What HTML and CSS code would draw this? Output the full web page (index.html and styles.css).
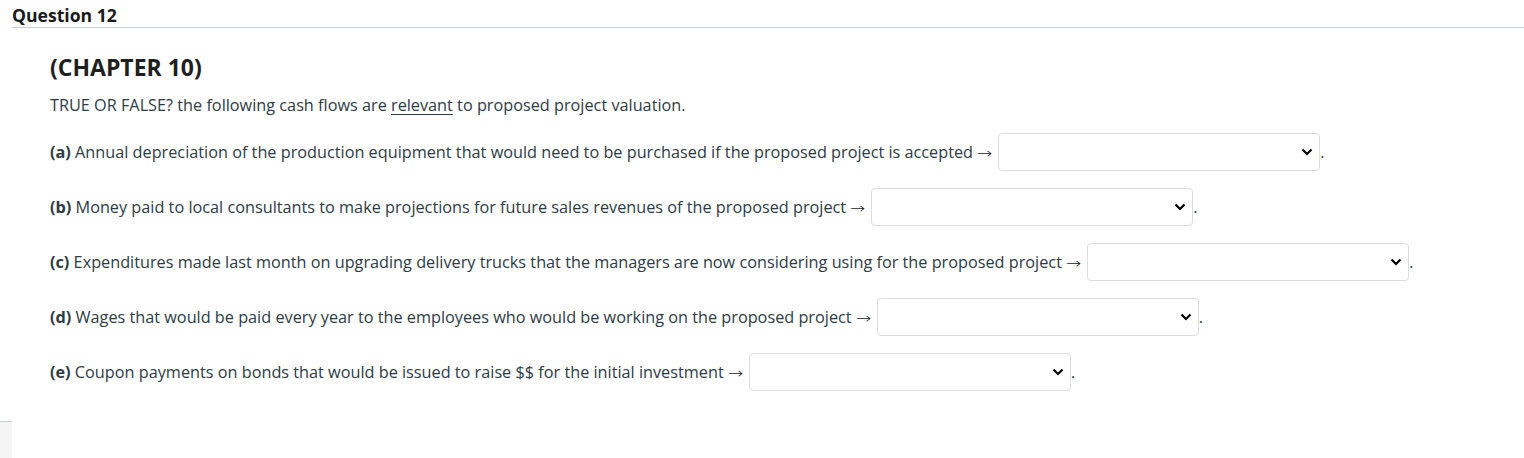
FILE: index.html
```html
<!DOCTYPE html>
<html>
<head>
<meta charset="utf-8">
<link rel="stylesheet" href="styles.css">
</head>
<body>
<div class="question">
  <div class="q-header"><span class="q-title">Question 12</span></div>
  <div class="q-body">
    <h2 class="chapter">(CHAPTER 10)</h2>
    <p class="intro">TRUE OR FALSE? the following cash flows are <u>relevant</u> to proposed project valuation.</p>
    <div class="row"><span><b>(a)</b> Annual depreciation of the production equipment that would need to be purchased if the proposed project is accepted <span class="arr">→</span></span><select class="sel"><option></option></select><span>.</span></div>
    <div class="row"><span><b>(b)</b> Money paid to local consultants to make projections for future sales revenues of the proposed project <span class="arr">→</span></span><select class="sel"><option></option></select><span>.</span></div>
    <div class="row"><span><b>(c)</b> Expenditures made last month on upgrading delivery trucks that the managers are now considering using for the proposed project <span class="arr">→</span></span><select class="sel"><option></option></select><span>.</span></div>
    <div class="row"><span><b>(d)</b> Wages that would be paid every year to the employees who would be working on the proposed project <span class="arr">→</span></span><select class="sel"><option></option></select><span>.</span></div>
    <div class="row"><span><b>(e)</b> Coupon payments on bonds that would be issued to raise $$ for the initial investment <span class="arr">→</span></span><select class="sel"><option></option></select><span>.</span></div>
  </div>
</div>
<div class="side-stub"></div>
</body>
</html>
```
FILE: styles.css
```css
html, body {
  margin: 0;
  padding: 0;
  background: #ffffff;
}
body {
  font-family: "Open Sans", "Noto Sans", sans-serif;
  color: #2d3b45;
  font-size: 16.25px;
}
.q-header {
  margin-left: 12px;
  height: 28px;
  border-bottom: 1px solid #c7cdd1;
  box-sizing: border-box;
  padding-top: 4px;
}
.q-title {
  font-size: 17.6px;
  font-weight: 700;
  color: #1a1a1a;
  line-height: 22px;
  display: block;
}
.q-body {
  padding-left: 50px;
}
.chapter {
  margin: 23px 0 0 0;
  font-size: 23px;
  line-height: 32px;
  font-weight: 700;
  color: #1f1f1f;
}
.intro {
  margin: 10px 0 0 0;
  line-height: 24px;
}
.intro u {
  text-underline-offset: 3px;
}
.row {
  display: flex;
  align-items: center;
  height: 38px;
  margin-top: 17px;
  white-space: nowrap;
}
.intro + .row {
  margin-top: 16px;
}
.row b {
  font-weight: 700;
}
.arr {
  display: inline-block;
  width: 16px;
  font-family: "DejaVu Sans", sans-serif;
  font-size: 14px;
  font-weight: 300;
  color: #1a1a1a;
  transform: scaleX(1.3);
  transform-origin: left center;
}
.sel {
  appearance: none;
  -webkit-appearance: none;
  width: 322px;
  height: 38px;
  margin-left: 5px;
  border: 1px solid #dcdcdc;
  border-radius: 4px;
  background-color: #fff;
  background-image: url("data:image/svg+xml;utf8,<svg xmlns='http://www.w3.org/2000/svg' width='12' height='8' viewBox='0 0 12 8'><path d='M1.5 1.5 L6 6 L10.5 1.5' fill='none' stroke='black' stroke-width='2.2'/></svg>");
  background-repeat: no-repeat;
  background-position: right 6px center;
  font-family: inherit;
  font-size: 16px;
}
.side-stub {
  width: 12px;
  height: 37px;
  margin-top: 30px;
  background: #f5f5f5;
  border-top: 1px solid #c7cdd1;
}
```
